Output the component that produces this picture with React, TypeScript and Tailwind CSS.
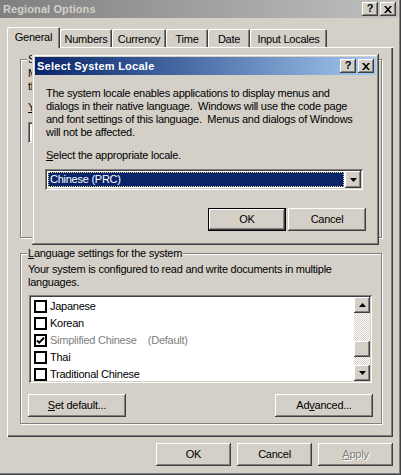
import React from 'react';

const RAISED =
  'bg-[#d4d0c8] shadow-[inset_-1px_-1px_#404040,inset_1px_1px_#ffffff,inset_-2px_-2px_#808080,inset_2px_2px_#d4d0c8]';
const SUNKEN =
  'shadow-[inset_1px_1px_#808080,inset_-1px_-1px_#ffffff,inset_2px_2px_#404040,inset_-2px_-2px_#d4d0c8]';

const Btn: React.FC<{ children: React.ReactNode; className?: string; isDefault?: boolean }> = ({
  children,
  className = '',
  isDefault = false,
}) => (
  <div
    className={`${RAISED} flex items-center justify-center h-[23px] ${isDefault ? 'border border-black' : ''} ${className}`}
  >
    {children}
  </div>
);

const CloseGlyph = () => (
  <svg width="8" height="7" viewBox="0 0 8 7">
    <path d="M0 0h2l2 2.2L6 0h2L5 3.5 8 7H6L4 4.8 2 7H0l3-3.5z" fill="#000" />
  </svg>
);

const CapBtns = () => (
  <div className="flex gap-[2px]">
    <div className={`${RAISED} w-[16px] h-[14px] flex items-center justify-center font-bold text-[11px] leading-none pb-px tracking-normal`}>
      ?
    </div>
    <div className={`${RAISED} w-[16px] h-[14px] flex items-center justify-center`}>
      <CloseGlyph />
    </div>
  </div>
);

const Down = () => (
  <svg width="7" height="4" viewBox="0 0 7 4">
    <path d="M0 0h7L3.5 4z" fill="#000" />
  </svg>
);

const Up = () => (
  <svg width="7" height="4" viewBox="0 0 7 4">
    <path d="M3.5 0L7 4H0z" fill="#000" />
  </svg>
);

const Group: React.FC<{
  label: React.ReactNode;
  className?: string;
  labelClass?: string;
  children?: React.ReactNode;
}> = ({ label, className = '', labelClass = '', children }) => (
  <div className={`relative border border-[#808080] shadow-[inset_1px_1px_#ffffff,1px_1px_#ffffff] ${className}`}>
    <span
      className={`absolute left-[6px] -top-[7px] bg-[#d4d0c8] px-px leading-[13px] whitespace-nowrap ${labelClass}`}
    >
      {label}
    </span>
    {children}
  </div>
);

const Check: React.FC<{ checked?: boolean }> = ({ checked }) => (
  <svg width="13" height="13" viewBox="0 0 13 13" className="shrink-0">
    <rect x="1" y="1" width="11" height="11" fill="#fff" stroke="#000" strokeWidth="2" />
    {checked && <path d="M3 6.5l2.2 2.2L10 3.8" fill="none" stroke="#000" strokeWidth="2" />}
  </svg>
);

const langs = [
  { name: 'Japanese' },
  { name: 'Korean' },
  { name: 'Simplified Chinese', def: true },
  { name: 'Thai' },
  { name: 'Traditional Chinese' },
];

const tabs = [
  { label: 'General', w: 'w-[53px]', active: true },
  { label: 'Numbers', w: 'w-[52px]' },
  { label: 'Currency', w: 'w-[54px]' },
  { label: 'Time', w: 'w-[42px]' },
  { label: 'Date', w: 'w-[42px]' },
  { label: 'Input Locales', w: 'w-[77px]' },
];

export default function App() {
  return (
    <div className="relative w-[401px] h-[475px] overflow-hidden bg-[#d4d0c8] text-black text-[11px] leading-[13px] tracking-[-0.25px] font-['Liberation_Sans',Arial,sans-serif] shadow-[inset_-1px_-1px_#404040,inset_-2px_-2px_#808080]">
      {/* title bar */}
      <div className="w-[398px] h-[18px] flex items-center justify-between pl-[3px] pr-[2px] bg-gradient-to-r from-[#808080] to-[#c0c0c0]">
        <span className="font-bold text-[#d4d0c8] tracking-[0.1px]">Regional Options</span>
        <CapBtns />
      </div>

      {/* tabs */}
      <div className="flex items-end h-[20px] mt-[9px] ml-[7px]">
        {tabs.map((t) =>
          t.active ? (
            <div
              key={t.label}
              className={`${t.w} relative z-10 h-[21px] -mb-px bg-[#d4d0c8] rounded-t-[2px] shadow-[inset_1px_1px_#ffffff,inset_-1px_0_#404040,inset_-2px_0_#808080] flex justify-center pt-[4px]`}
            >
              {t.label}
            </div>
          ) : (
            <div
              key={t.label}
              className={`${t.w} h-[18px] rounded-t-[2px] shadow-[inset_1px_1px_#ffffff,inset_-1px_0_#404040,inset_-2px_0_#808080] flex justify-center pt-[4px]`}
            >
              {t.label}
            </div>
          )
        )}
      </div>

      {/* tab panel */}
      <div className="ml-[7px] w-[386px] h-[390px] shadow-[inset_1px_1px_#ffffff,inset_-1px_-1px_#404040,inset_-2px_-2px_#808080] pl-[13px] pt-[12px] flex flex-col">
        {/* group mostly hidden behind the dialog */}
        <Group label="Settings" labelClass="w-[6px] overflow-hidden" className="w-[362px] h-[179px]">
          <div className="ml-[7px] mt-[7px] w-[4px] overflow-hidden whitespace-nowrap">
            <p>Many programs</p>
            <p>the standard</p>
            <p className="mt-[8px]">
              <span className="underline">Y</span>our locale
            </p>
            <div className={`${SUNKEN} bg-white w-[343px] h-[21px] mt-[8px]`} />
          </div>
        </Group>

        <Group
          label={
            <>
              <span className="underline">L</span>anguage settings for the system
            </>
          }
          className="mt-[15px] w-[362px] h-[171px]"
        >
          <div className="pl-[7px] pt-[9px] flex flex-col">
            <p>Your system is configured to read and write documents in multiple</p>
            <p>languages.</p>
            <div className={`${SUNKEN} bg-white ml-px mt-[6px] w-[343px] h-[88px] p-[2px] flex`}>
              <div className="flex-1 pt-px overflow-hidden">
                {langs.map((l) => (
                  <div key={l.name} className="h-[17px] flex items-center pl-[3px] gap-[3px]">
                    <Check checked={l.def} />
                    {l.def ? (
                      <span className="text-[#808080] whitespace-pre">{l.name}    (Default)</span>
                    ) : (
                      <span>{l.name}</span>
                    )}
                  </div>
                ))}
              </div>
              <div className="w-[16px] flex flex-col bg-[repeating-conic-gradient(#d4d0c8_0_25%,#ffffff_0_50%)] bg-[length:2px_2px]">
                <div className={`${RAISED} h-[16px] flex items-center justify-center`}>
                  <Up />
                </div>
                <div className="h-[28px]" />
                <div className={`${RAISED} h-[16px]`} />
                <div className="h-[8px]" />
                <div className={`${RAISED} h-[16px] flex items-center justify-center`}>
                  <Down />
                </div>
              </div>
            </div>
            <div className="flex justify-between w-[345px] mt-[11px]">
              <Btn className="w-[98px]">
                <span>
                  <span className="underline">S</span>et default...
                </span>
              </Btn>
              <Btn className="w-[98px]">
                <span>
                  Ad<span className="underline">v</span>anced...
                </span>
              </Btn>
            </div>
          </div>
        </Group>
      </div>

      {/* bottom buttons */}
      <div className="flex gap-[6px] ml-[156px] mt-[6px]">
        <Btn className="w-[75px]">OK</Btn>
        <Btn className="w-[75px]">Cancel</Btn>
        <Btn className="w-[75px]">
          <span className="text-[#808080] [text-shadow:1px_1px_#ffffff]">
            <span className="underline">A</span>pply
          </span>
        </Btn>
      </div>

      {/* modal dialog */}
      <div className="absolute left-[32px] top-[54px] w-[347px] h-[191px] bg-[#d4d0c8] p-[3px] shadow-[inset_-1px_-1px_#404040,inset_1px_1px_#d4d0c8,inset_-2px_-2px_#808080,inset_2px_2px_#ffffff]">
        <div className="h-[18px] flex items-center justify-between pl-[2px] pr-[2px] bg-gradient-to-r from-[#0a246a] to-[#a6caf0]">
          <span className="font-bold text-white tracking-[0.25px]">Select System Locale</span>
          <CapBtns />
        </div>
        <div className="pl-[11px] pt-[12px]">
          <div className="whitespace-pre">
            <p>The system locale enables applications to display menus and</p>
            <p>dialogs in their native language.  Windows will use the code page</p>
            <p>and font settings of this language.  Menus and dialogs of Windows</p>
            <p>will not be affected.</p>
          </div>
          <p className="mt-[10px]">
            <span className="underline">S</span>elect the appropriate locale.
          </p>
          <div className={`${SUNKEN} -ml-px mt-[7px] w-[318px] h-[21px] p-[2px] flex`}>
            <div className="flex-1 bg-white p-px">
              <div className="h-full bg-[#0a246a] border border-dotted border-[#e8d890] text-white pl-px flex items-center">
                Chinese (PRC)
              </div>
            </div>
            <div className={`${RAISED} w-[16px] flex items-center justify-center`}>
              <Down />
            </div>
          </div>
          <div className="flex gap-[2px] ml-[162px] mt-[18px]">
            <Btn className="w-[78px]" isDefault>
              OK
            </Btn>
            <Btn className="w-[78px]">Cancel</Btn>
          </div>
        </div>
      </div>
    </div>
  );
}
